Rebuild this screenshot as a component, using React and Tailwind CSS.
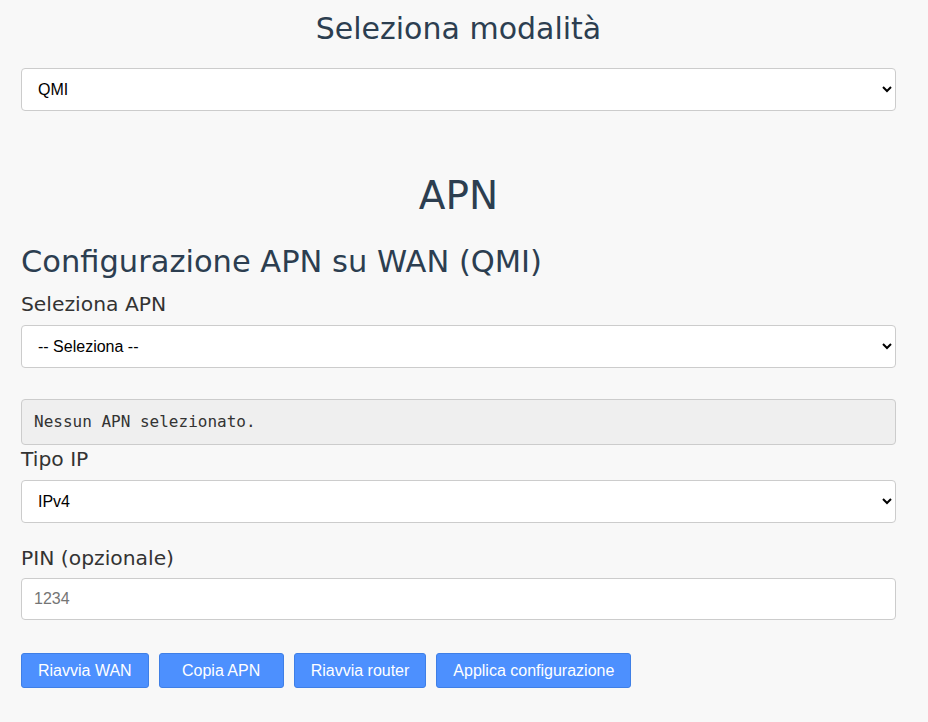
import React from "react";

function Select({ value, options }) {
  return (
    <select
      defaultValue={value}
      className="block w-full h-[43px] rounded-[4px] border border-[#cccccc] bg-white pl-3 pr-2 font-['Liberation_Sans',Arial,sans-serif] text-[16px] text-black"
    >
      {options.map((o) => (
        <option key={o} value={o}>
          {o}
        </option>
      ))}
    </select>
  );
}

function Btn({ children }) {
  return (
    <button className="h-[35px] min-w-[125px] rounded-[3px] border border-[#3f7fe6] bg-[#4d90fe] px-4 font-['Liberation_Sans',Arial,sans-serif] text-[16px] text-white">
      {children}
    </button>
  );
}

function Label({ children, className }) {
  return (
    <label
      className={
        "font-['DejaVu_Sans',Verdana,sans-serif] text-[20.3px] leading-[24px] text-[#333333] " +
        className
      }
    >
      {children}
    </label>
  );
}

export default function App() {
  return (
    <div className="min-h-[722px] w-full bg-[#f8f8f8] font-['DejaVu_Sans',Verdana,sans-serif]">
      <div className="flex flex-col pl-[21px] pr-[32px] pt-[11px]">
        <h1 className="text-center text-[30px] leading-[36px] text-[#2c3e50]">
          Seleziona modalità
        </h1>
        <div className="mt-[21px]">
          <Select value="QMI" options={["QMI", "NCM", "PPP"]} />
        </div>
        <h2 className="mt-[62px] text-center text-[39px] leading-[46px] text-[#2c3e50]">
          APN
        </h2>
        <h3 className="mt-[25px] text-[30.5px] leading-[36px] text-[#2c3e50]">
          Configurazione APN su WAN (QMI)
        </h3>
        <Label className="mt-[12px]">Seleziona APN</Label>
        <div className="mt-[9px]">
          <Select value="-- Seleziona --" options={["-- Seleziona --"]} />
        </div>
        <div className="mt-[31px] flex h-[46px] items-center rounded-[4px] border border-[#cccccc] bg-[#efefef] px-3 font-['DejaVu_Sans_Mono',monospace] text-[16px] text-[#333333]">
          Nessun APN selezionato.
        </div>
        <Label className="mt-[2px]">Tipo IP</Label>
        <div className="mt-[9px]">
          <Select value="IPv4" options={["IPv4", "IPv6", "IPv4v6"]} />
        </div>
        <Label className="mt-[23px]">PIN (opzionale)</Label>
        <input
          placeholder="1234"
          className="mt-[8px] block h-[42px] w-full rounded-[4px] border border-[#cccccc] bg-white px-3 font-['Liberation_Sans',Arial,sans-serif] text-[16px] text-black placeholder:text-[#757575]"
        />
        <div className="mt-[33px] flex gap-[10px]">
          <Btn>Riavvia WAN</Btn>
          <Btn>Copia APN</Btn>
          <Btn>Riavvia router</Btn>
          <Btn>Applica configurazione</Btn>
        </div>
      </div>
    </div>
  );
}
